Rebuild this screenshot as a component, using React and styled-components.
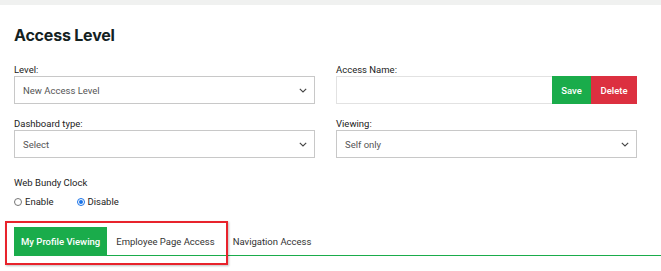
import React from "react";
import styled, { createGlobalStyle } from "styled-components";

const Global = createGlobalStyle`
  html, body { margin: 0; padding: 0; background: #fff; }
  body { font-family: Roboto, "Noto Sans", sans-serif; color: #222; }
  * { box-sizing: border-box; }
`;

const Page = styled.div`
  position: relative;
  width: 661px;
  height: 271px;
  overflow: hidden;
  background: #fff;
`;

const TopStrip = styled.div`
  height: 5px;
  background: #f0f1f0;
`;

const Content = styled.div`
  padding: 20px 0 0 14px;
`;

const Title = styled.h1`
  margin: 0 0 19px;
  font-family: Inter, Roboto, sans-serif;
  font-size: 16px;
  line-height: 20px;
  font-weight: 700;
  color: #14221f;
  letter-spacing: -0.2px;
`;

const Grid = styled.div`
  display: grid;
  grid-template-columns: 301px 301px;
  column-gap: 21px;
  row-gap: 14px;
`;

const Field = styled.div`
  display: flex;
  flex-direction: column;
`;

const Label = styled.label`
  font-size: 9.5px;
  line-height: 12px;
  color: #222;
  height: 12px;
`;

const SelectBox = styled.div`
  height: 28px;
  border: 1px solid #c8c8c8;
  display: flex;
  align-items: center;
  justify-content: space-between;
  padding: 0 7px 0 8px;
  font-size: 9.5px;
  color: #555;
  background: #fff;
`;

const InputRow = styled.div`
  display: flex;
  height: 28px;
`;

const TextInput = styled.div`
  flex: 1;
  border: 1px solid #e2e2e2;
  border-right: none;
`;

const Button = styled.button`
  border: none;
  margin: 0;
  height: 28px;
  width: ${(p) => p.$w}px;
  background: ${(p) => p.$bg};
  color: #fff;
  font-family: inherit;
  font-size: 9.5px;
  font-weight: 500;
  padding: 0;
`;

const Section = styled.div`
  margin-top: 19px;
`;

const SectionLabel = styled.div`
  font-size: 9.5px;
  line-height: 12px;
  color: #222;
`;

const RadioRow = styled.div`
  display: flex;
  gap: 23px;
  margin-top: 7px;
  font-size: 9.5px;
  line-height: 12px;
  color: #222;
`;

const RadioItem = styled.span`
  display: flex;
  align-items: center;
  gap: 3px;
`;

const RadioDot = styled.span`
  width: 8px;
  height: 8px;
  border-radius: 50%;
  border: 1px solid ${(p) => (p.$on ? "#1a73e8" : "#767676")};
  display: inline-flex;
  align-items: center;
  justify-content: center;
  &::after {
    content: "";
    width: 4px;
    height: 4px;
    border-radius: 50%;
    background: ${(p) => (p.$on ? "#1a73e8" : "transparent")};
  }
`;

const Tabs = styled.div`
  margin-top: 19px;
  display: flex;
  border-bottom: 1px solid #1aac4b;
  height: 29px;
`;

const Tab = styled.div`
  height: 28px;
  padding: 0 ${(p) => (p.$active ? 7 : 9)}px;
  display: flex;
  align-items: center;
  font-size: 9.5px;
  font-weight: ${(p) => (p.$active ? 500 : 400)};
  color: ${(p) => (p.$active ? "#fff" : "#333")};
  background: ${(p) => (p.$active ? "#1aac4b" : "transparent")};
`;

const Highlight = styled.div`
  position: absolute;
  left: 5px;
  top: 221px;
  width: 223px;
  height: 44px;
  border: 2px solid #e8232c;
  box-shadow: 1px 1px 2px rgba(0, 0, 0, 0.25);
  pointer-events: none;
`;

const Chevron = () => (
  <svg width="8" height="5" viewBox="0 0 8 5" fill="none">
    <path d="M0.8 0.8L4 4L7.2 0.8" stroke="#444" strokeWidth="1.1" />
  </svg>
);

export default function App() {
  return (
    <Page>
      <Global />
      <TopStrip />
      <Content>
        <Title>Access Level</Title>
        <Grid>
          <Field>
            <Label>Level:</Label>
            <SelectBox>
              New Access Level
              <Chevron />
            </SelectBox>
          </Field>
          <Field>
            <Label>Access Name:</Label>
            <InputRow>
              <TextInput />
              <Button $w={39} $bg="#1aac4b">Save</Button>
              <Button $w={46} $bg="#dc3040">Delete</Button>
            </InputRow>
          </Field>
          <Field>
            <Label>Dashboard type:</Label>
            <SelectBox>
              Select
              <Chevron />
            </SelectBox>
          </Field>
          <Field>
            <Label>Viewing:</Label>
            <SelectBox>
              Self only
              <Chevron />
            </SelectBox>
          </Field>
        </Grid>
        <Section>
          <SectionLabel>Web Bundy Clock</SectionLabel>
          <RadioRow>
            <RadioItem>
              <RadioDot />
              Enable
            </RadioItem>
            <RadioItem>
              <RadioDot $on />
              Disable
            </RadioItem>
          </RadioRow>
        </Section>
        <Tabs>
          <Tab $active>My Profile Viewing</Tab>
          <Tab>Employee Page Access</Tab>
          <Tab>Navigation Access</Tab>
        </Tabs>
      </Content>
      <Highlight />
    </Page>
  );
}
